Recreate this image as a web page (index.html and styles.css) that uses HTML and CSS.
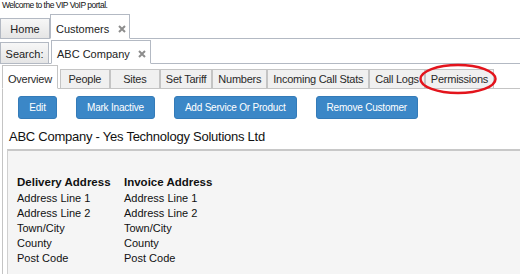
FILE: index.html
```html
<!DOCTYPE html>
<html lang="en">
<head>
<meta charset="UTF-8">
<meta name="viewport" content="width=device-width, initial-scale=1.0">
<title>VIP VoIP Portal - Customers</title>
<link rel="stylesheet" href="styles.css">
</head>
<body>

<div class="welcome">Welcome to the VIP VoIP portal.</div>

<div class="tabbar main">
  <div class="tab home">Home</div>
  <div class="tab active closable">Customers
    <svg class="close" width="8" height="8" viewBox="0 0 8 8"><path d="M1 1L7 7M7 1L1 7"/></svg>
  </div>
</div>

<div class="tabbar sub">
  <div class="tab search">Search:</div>
  <div class="tab active closable company-tab">ABC Company
    <svg class="close" width="8" height="8" viewBox="0 0 8 8"><path d="M1 1L7 7M7 1L1 7"/></svg>
  </div>
</div>

<div class="tabbar detail">
  <div class="tab active">Overview</div>
  <div class="tab">People</div>
  <div class="tab">Sites</div>
  <div class="tab">Set Tariff</div>
  <div class="tab">Numbers</div>
  <div class="tab">Incoming Call Stats</div>
  <div class="tab">Call Logs</div>
  <div class="tab">Permissions</div>
</div>

<div class="panel">
  <div class="actions">
    <button class="button btn-edit">Edit</button>
    <button class="button">Mark Inactive</button>
    <button class="button">Add Service Or Product</button>
    <button class="button">Remove Customer</button>
  </div>

  <h2 class="company">ABC Company - Yes Technology Solutions Ltd</h2>

  <div class="details">
    <div class="address">
      <h3>Delivery Address</h3>
      <div>Address Line 1</div>
      <div>Address Line 2</div>
      <div>Town/City</div>
      <div>County</div>
      <div>Post Code</div>
    </div>
    <div class="address">
      <h3>Invoice Address</h3>
      <div>Address Line 1</div>
      <div>Address Line 2</div>
      <div>Town/City</div>
      <div>County</div>
      <div>Post Code</div>
    </div>
  </div>
</div>

<!-- red ring drawn round the Permissions tab -->
<svg class="highlight" width="82" height="34" viewBox="0 0 82 34">
  <ellipse cx="40" cy="17" rx="37.5" ry="14"/>
</svg>

</body>
</html>
```

FILE: styles.css
```css
body {
  margin: 0;
  width: 520px;
  height: 274px;
  overflow: hidden;
  position: relative;
  background: #fff;
  color: #1a1a1a;
  font-family: "Liberation Sans", Arial, sans-serif;
}

.welcome {
  height: 14px;
  padding-left: 2px;
  font-size: 8.5px;
  line-height: 11px;
  letter-spacing: -0.5px;
  color: #111;
}

/* tab strips */
.tabbar {
  display: flex;
  align-items: flex-end;
  height: 24px;
  border-bottom: 1px solid #b3b9c3;
}
.tab {
  box-sizing: border-box;
  display: flex;
  align-items: flex-end;
  justify-content: center;
  margin-bottom: -1px;
  padding: 0 5px 2px;
  border: 1px solid #b3b9c3;
  background: linear-gradient(#f7f7f7, #e5e5e5);
  font-size: 11px;
  line-height: 14px;
  white-space: nowrap;
  color: #222;
}
.tab.active {
  background: #fff;
  border-bottom-color: #fff;
}

.main .tab { height: 21px; }
.main .tab.active { height: 25px; }
.main .home { width: 50px; }

.sub .tab { height: 22px; }
.sub .tab.active { height: 24px; }
.sub .search { width: 49px; margin-right: 2px; }

.closable {
  justify-content: flex-start;
  padding-right: 3px;
}
.closable .close {
  margin: 0 0 3px 9px;
}
.company-tab .close { margin-left: 8px; }
.company-tab { padding-right: 4px; }
.close path {
  stroke: #8d8d8d;
  stroke-width: 2;
  fill: none;
}

.detail {
  margin-left: 2px;
  border-bottom-color: #c4c4c4;
}
.detail .tab {
  height: 20px;
  min-width: 50px;
  border-color: #c4c4c4;
  background: #f0f0f0;
  letter-spacing: -0.25px;
  color: #2a2a2a;
}
.detail .tab.active {
  height: 24px;
  margin-right: 2px;
  background: #fff;
  border-bottom-color: #fff;
}

/* overview panel */
.panel {
  box-sizing: border-box;
  margin-left: 2px;
  height: 185px;
  padding: 7px 0 0 4px;
  border-left: 1px solid #c4c4c4;
}

.actions {
  display: flex;
  gap: 19px;
  padding-left: 11px;
}
.button {
  height: 23px;
  padding: 0 10px;
  border: 1px solid #347bb8;
  border-radius: 3px;
  background: #3b87c7;
  color: #fff;
  font-family: "Liberation Sans", Arial, sans-serif;
  font-size: 10px;
  letter-spacing: -0.2px;
}
.btn-edit { min-width: 39px; }

.company {
  margin: 10px 0 4px 2px;
  font-size: 13px;
  line-height: 16px;
  font-weight: normal;
  letter-spacing: -0.25px;
  color: #111;
}

.details {
  box-sizing: border-box;
  display: grid;
  grid-template-columns: 107px 1fr;
  align-content: start;
  height: 125px;
  padding: 24px 0 0 9px;
  border-top: 2px solid #c8c8c8;
  border-left: 1px solid #d0d0d0;
  background: #f5f5f5;
}
.address {
  font-size: 11px;
  line-height: 15px;
  color: #111;
}
.address h3 {
  margin: 0 0 2px;
  font-size: 11.5px;
  line-height: 14px;
  font-weight: bold;
}

.highlight {
  position: absolute;
  left: 418px;
  top: 62px;
}
.highlight ellipse {
  fill: none;
  stroke: #e3141c;
  stroke-width: 2.5;
}
```
